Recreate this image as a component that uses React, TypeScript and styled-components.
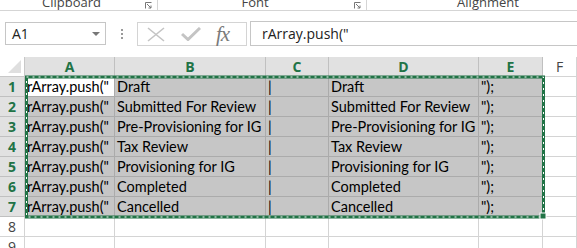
import * as React from 'react';
import styled, { createGlobalStyle } from 'styled-components';

const GlobalStyle = createGlobalStyle`
  html, body {
    margin: 0;
    padding: 0;
    background: #fff;
    overflow: hidden;
  }
  body {
    font-family: 'Open Sans', 'Noto Sans', sans-serif;
  }
`;

const Page = styled.div`
  width: 577px;
  height: 248px;
  overflow: hidden;
  display: flex;
  flex-direction: column;

  & > * {
    flex-shrink: 0;
  }
`;

const Ribbon = styled.div`
  height: 10px;
  border-bottom: 1px solid #d5d5d5;
  display: flex;
  overflow: hidden;
`;

const RibbonGroup = styled.div<{ $width?: number; $pad?: number }>`
  width: ${({ $width }) => ($width ? `${$width}px` : 'auto')};
  flex: ${({ $width }) => ($width ? 'none' : '1')};
  display: flex;
  align-items: flex-end;
  padding-left: ${({ $pad }) => $pad || 0}px;
  border-right: ${({ $width }) => ($width ? '1px solid #d5d5d5' : 'none')};
  height: 10px;
`;

const GroupLabel = styled.div<{ $width?: number }>`
  flex: ${({ $width }) => ($width ? 'none' : '1')};
  width: ${({ $width }) => ($width ? `${$width}px` : 'auto')};
  text-align: center;
  font-size: 13px;
  color: #444;
  line-height: 13px;
  margin-bottom: 1px;
  white-space: nowrap;
`;

const Launcher = styled.svg`
  width: 7px;
  height: 7px;
  margin: 0 5px 1px 2px;
  flex: none;
`;

const FormulaRow = styled.div`
  margin-top: 10px;
  height: 25px;
  display: flex;
  align-items: stretch;
`;

const NameBox = styled.div`
  margin: 1px 0 1px 5px;
  width: 101px;
  box-sizing: border-box;
  border: 1px solid #c6c6c6;
  display: flex;
  align-items: center;
  justify-content: space-between;
  padding: 0 5px 0 6px;
  font-size: 14px;
  color: #222;
`;

const DropArrow = styled.div`
  width: 0;
  height: 0;
  border-left: 4px solid transparent;
  border-right: 4px solid transparent;
  border-top: 4px solid #777;
`;

const Grip = styled.div`
  width: 31px;
  display: flex;
  flex-direction: column;
  align-items: center;
  justify-content: center;
  gap: 2px;

  span {
    width: 2px;
    height: 2px;
    background: #9a9a9a;
  }
`;

const ButtonBox = styled.div`
  margin: 1px 0 0;
  width: 110px;
  box-sizing: border-box;
  border: 1px solid #d4d4d4;
  display: flex;
  align-items: center;
  padding-left: 9px;
  gap: 16px;
`;

const FxLabel = styled.span`
  font-family: 'Liberation Serif', 'DejaVu Serif', serif;
  font-style: italic;
  font-size: 21px;
  color: #7a7a7a;
  margin-left: -1px;
  letter-spacing: -1px;
`;

const FormulaInput = styled.div`
  flex: 1;
  margin-left: 3px;
  border-top: 1px solid #c6c6c6;
  border-bottom: 1px solid #c6c6c6;
  border-left: 1px solid #c6c6c6;
  display: flex;
  align-items: center;
  padding-left: 11px;
  font-size: 14px;
  color: #222;
`;

const SheetWrap = styled.div`
  margin-top: 11px;
  position: relative;
`;

const Sheet = styled.div`
  display: grid;
  grid-template-columns: 25px 90px 151px 63px 150px 64px 1fr;
  grid-auto-rows: 20px;
`;

const Corner = styled.div`
  position: relative;
  background: #fff;
  border-right: 1px solid #c8c8c8;
  border-bottom: 1px solid #c8c8c8;
  box-sizing: border-box;

  &::after {
    content: '';
    position: absolute;
    right: 3px;
    bottom: 3px;
    border-left: 13px solid transparent;
    border-bottom: 13px solid #dfdfdf;
  }
`;

const ColHead = styled.div<{ $on?: boolean }>`
  box-sizing: border-box;
  background: ${({ $on }) => ($on ? '#e1e1e1' : '#fff')};
  border-right: 1px solid ${({ $on }) => ($on ? '#c0c0c0' : '#d4d4d4')};
  border-bottom: 1px solid ${({ $on }) => ($on ? '#c0c0c0' : '#d4d4d4')};
  color: ${({ $on }) => ($on ? '#217346' : '#444')};
  font-weight: ${({ $on }) => ($on ? 700 : 400)};
  font-size: 14px;
  display: flex;
  align-items: center;
  justify-content: center;
`;

const RowHead = styled(ColHead)`
  font-size: 14px;
`;

const Cell = styled.div<{ $on?: boolean; $active?: boolean }>`
  box-sizing: border-box;
  background: ${({ $on, $active }) => ($active ? '#fff' : $on ? '#c6c6c6' : '#fff')};
  border-right: 1px solid ${({ $on }) => ($on ? '#ababab' : '#d4d4d4')};
  border-bottom: 1px solid ${({ $on }) => ($on ? '#ababab' : '#d4d4d4')};
  font-family: Lato, 'Liberation Sans', sans-serif;
  font-size: 14.5px;
  line-height: 19px;
  padding-left: 2px;
  color: #000;
  white-space: nowrap;
  overflow: visible;
`;

const Marquee = styled.svg`
  position: absolute;
  left: 25px;
  top: 19px;
  overflow: visible;
  pointer-events: none;
`;

const statuses = [
  'Draft',
  'Submitted For Review',
  'Pre-Provisioning for IG',
  'Tax Review',
  'Provisioning for IG',
  'Completed',
  'Cancelled',
];

const cols = ['A', 'B', 'C', 'D', 'E'];

const App: React.FC = () => {
  const rows = statuses.map((s) => ['rArray.push("', s, '|', s, '");']);

  return (
    <Page>
      <GlobalStyle />
      <Ribbon>
        <RibbonGroup $width={157}>
          <GroupLabel>Clipboard</GroupLabel>
          <Launcher viewBox="0 0 7 7">
            <path d="M0.5 6.5 V0.5 H6.5" stroke="#777" fill="none" />
            <path d="M2 2 L6 6 M6 3.5 V6 H3.5" stroke="#777" fill="none" />
          </Launcher>
        </RibbonGroup>
        <RibbonGroup $width={208}>
          <GroupLabel>Font</GroupLabel>
          <Launcher viewBox="0 0 7 7">
            <path d="M0.5 6.5 V0.5 H6.5" stroke="#777" fill="none" />
            <path d="M2 2 L6 6 M6 3.5 V6 H3.5" stroke="#777" fill="none" />
          </Launcher>
        </RibbonGroup>
        <RibbonGroup $pad={36}>
          <GroupLabel $width={170}>Alignment</GroupLabel>
        </RibbonGroup>
      </Ribbon>

      <FormulaRow>
        <NameBox>
          <span>A1</span>
          <DropArrow />
        </NameBox>
        <Grip>
          <span />
          <span />
          <span />
        </Grip>
        <ButtonBox>
          <svg width="18" height="15" viewBox="0 0 18 15">
            <path d="M1 1 L17 14 M17 1 L1 14" stroke="#c4c4c4" strokeWidth="1.6" fill="none" />
          </svg>
          <svg width="20" height="14" viewBox="0 0 20 14">
            <path d="M1 7 L7 12.5 L19 1" stroke="#c4c4c4" strokeWidth="3" fill="none" />
          </svg>
          <FxLabel>fx</FxLabel>
        </ButtonBox>
        <FormulaInput>rArray.push("</FormulaInput>
      </FormulaRow>

      <SheetWrap>
        <Sheet>
          <Corner />
          {cols.map((c) => (
            <ColHead key={c} $on>
              {c}
            </ColHead>
          ))}
          <ColHead>F</ColHead>

          {rows.map((r, i) => (
            <React.Fragment key={i}>
              <RowHead $on>{i + 1}</RowHead>
              {r.map((v, j) => (
                <Cell key={j} $on $active={i === 0 && j === 0}>
                  {v}
                </Cell>
              ))}
              <Cell />
            </React.Fragment>
          ))}

          {[8, 9].map((n) => (
            <React.Fragment key={n}>
              <RowHead>{n}</RowHead>
              {cols.map((c) => (
                <Cell key={c} />
              ))}
              <Cell />
            </React.Fragment>
          ))}
        </Sheet>

        <Marquee width="520" height="142">
          <rect x="1.5" y="1" width="517" height="140" fill="none" stroke="#217346" strokeWidth="3" />
          <rect
            x="1.5"
            y="1"
            width="517"
            height="140"
            fill="none"
            stroke="#fff"
            strokeWidth="1"
            strokeDasharray="2 4"
          />
          <rect x="515" y="137" width="6" height="6" fill="#217346" stroke="#fff" strokeWidth="1" />
        </Marquee>
      </SheetWrap>
    </Page>
  );
};

export default App;
